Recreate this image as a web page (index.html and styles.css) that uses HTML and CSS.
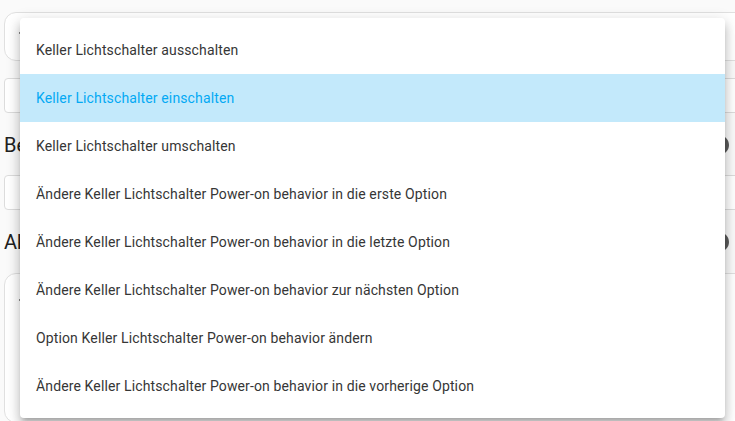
FILE: index.html
```html
<!DOCTYPE html>
<html lang="de">
<head>
<meta charset="utf-8">
<link rel="stylesheet" href="styles.css">
</head>
<body>
<div class="page">
  <div class="card card-top">
    <svg class="chev" viewBox="0 0 24 24"><path d="M7.41,8.58L12,13.17L16.59,8.58L18,10L12,16L6,10L7.41,8.58Z"/></svg>
  </div>
  <div class="field"></div>
  <div class="heading-row">
    <h2 class="heading">Bedingungen</h2>
    <svg class="help" viewBox="0 0 24 24"><path d="M15.07,11.25L14.17,12.17C13.45,12.89 13,13.5 13,15H11V14.5C11,13.39 11.45,12.39 12.17,11.67L13.41,10.41C13.78,10.05 14,9.55 14,9C14,7.89 13.1,7 12,7A2,2 0 0,0 10,9H8A4,4 0 0,1 12,5A4,4 0 0,1 16,9C16,9.88 15.64,10.67 15.07,11.25M13,19H11V17H13M12,2A10,10 0 0,0 2,12C2,17.53 6.47,22 12,22C17.53,22 22,17.53 22,12C22,6.47 17.53,2 12,2Z"/></svg>
  </div>
  <div class="field"></div>
  <div class="heading-row">
    <h2 class="heading">Aktionen</h2>
    <svg class="help" viewBox="0 0 24 24"><path d="M15.07,11.25L14.17,12.17C13.45,12.89 13,13.5 13,15H11V14.5C11,13.39 11.45,12.39 12.17,11.67L13.41,10.41C13.78,10.05 14,9.55 14,9C14,7.89 13.1,7 12,7A2,2 0 0,0 10,9H8A4,4 0 0,1 12,5A4,4 0 0,1 16,9C16,9.88 15.64,10.67 15.07,11.25M13,19H11V17H13M12,2A10,10 0 0,0 2,12C2,17.53 6.47,22 12,22C17.53,22 22,17.53 22,12C22,6.47 17.53,2 12,2Z"/></svg>
  </div>
  <div class="card card-bottom">
    <svg class="chev" viewBox="0 0 24 24"><path d="M7.41,8.58L12,13.17L16.59,8.58L18,10L12,16L6,10L7.41,8.58Z"/></svg>
  </div>
</div>

<ul class="menu">
  <li class="item">Keller Lichtschalter ausschalten</li>
  <li class="item selected">Keller Lichtschalter einschalten</li>
  <li class="item">Keller Lichtschalter umschalten</li>
  <li class="item">Ändere Keller Lichtschalter Power-on behavior in die erste Option</li>
  <li class="item">Ändere Keller Lichtschalter Power-on behavior in die letzte Option</li>
  <li class="item">Ändere Keller Lichtschalter Power-on behavior zur nächsten Option</li>
  <li class="item">Option Keller Lichtschalter Power-on behavior ändern</li>
  <li class="item">Ändere Keller Lichtschalter Power-on behavior in die vorherige Option</li>
</ul>
</body>
</html>
```

FILE: styles.css
```css
html, body {
  margin: 0;
  padding: 0;
  width: 735px;
  height: 421px;
  overflow: hidden;
  background: #fafafa;
  font-family: Roboto, "Liberation Sans", sans-serif;
}

.page {
  position: relative;
  width: 727px;
  padding: 12px 0 0 4px;
  display: flex;
  flex-direction: column;
}

.card {
  box-sizing: border-box;
  margin-right: -20px;
  background: #fff;
  border: 1px solid #e0e0e0;
  border-radius: 12px;
  display: flex;
  align-items: flex-start;
}

.card-top {
  height: 49px;
  padding: 10px 0 0 8px;
}

.card-bottom {
  margin-top: 15px;
  height: 150px;
  padding: 16px 0 0 8px;
}

.chev {
  width: 24px;
  height: 24px;
  fill: #212121;
  flex: none;
}

.field {
  box-sizing: border-box;
  height: 35px;
  margin-top: 17px;
  margin-right: -20px;
  background: #fff;
  border: 1px solid #dcdcdc;
  border-radius: 4px;
}

.heading-row + .field {
  margin-top: 14px;
}

.heading-row {
  display: flex;
  align-items: center;
  justify-content: space-between;
  height: 32px;
  margin-top: 16px;
}

.heading {
  margin: 0;
  font-size: 20px;
  font-weight: 400;
  color: #212121;
  line-height: 32px;
}

.help {
  width: 24px;
  height: 24px;
  fill: #5a5a5a;
}

.menu {
  position: absolute;
  left: 20px;
  top: 18px;
  width: 705px;
  margin: 0;
  padding: 8px 0;
  list-style: none;
  background: #fff;
  border-radius: 4px;
  box-shadow: 0 5px 5px -3px rgba(0,0,0,0.2), 0 8px 10px 1px rgba(0,0,0,0.14), 0 3px 14px 2px rgba(0,0,0,0.12);
}

.item {
  height: 48px;
  padding: 0 16px;
  display: flex;
  align-items: center;
  font-size: 14px;
  letter-spacing: 0.009375em;
  color: #363636;
  white-space: nowrap;
}

.item.selected {
  background: #c3e9fb;
  color: #03a9f4;
}
```
